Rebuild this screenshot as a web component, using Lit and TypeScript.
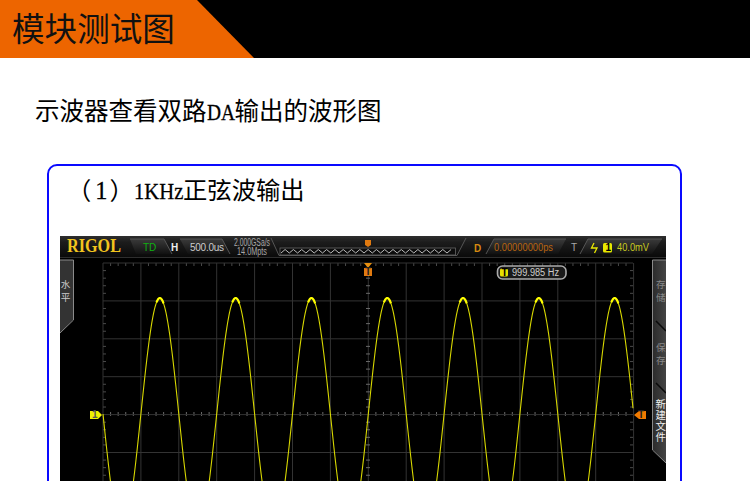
import { LitElement, html, css, svg } from "lit";
import { customElement } from "lit/decorators.js";

const X0 = 103, X1 = 633, Y0 = 263, Y1 = 565, CY = 414, STEP = 37.9;

function wavePath(a: number = X0, b: number = X1): string {
  const pts: string[] = [];
  for (let x = a; x <= b; x += 0.5) {
    const y = CY - 116 * Math.sin((2 * Math.PI * (x - X0)) / 75.8 + Math.PI);
    pts.push(`${x.toFixed(1)},${y.toFixed(1)}`);
  }
  return "M" + pts.join("L");
}

function grid() {
  const out = [];
  for (let i = 0; i <= 14; i++) {
    const x = X0 + i * STEP;
    out.push(svg`<line class="g" x1=${x} x2=${x} y1=${Y0} y2=${Y1} />`);
    for (let k = 1; k < 5; k++) {
      const tx = x + (k * STEP) / 5;
      if (i < 14) {
        out.push(svg`<line class="t" x1=${tx} x2=${tx} y1=${Y0} y2=${Y0 + 3} />`);
        out.push(svg`<line class="t2" x1=${tx} x2=${tx} y1=${CY - 2} y2=${CY + 2} />`);
      }
    }
  }
  for (let j = 0; j <= 8; j++) {
    const y = Y0 + j * STEP;
    out.push(svg`<line class="g" x1=${X0} x2=${X1} y1=${y} y2=${y} />`);
    for (let k = 1; k < 5; k++) {
      const ty = y + (k * STEP) / 5;
      out.push(svg`<line class="t" x1=${X0} x2=${X0 + 3} y1=${ty} y2=${ty} />`);
      out.push(svg`<line class="t" x1=${X1 - 3} x2=${X1} y1=${ty} y2=${ty} />`);
      out.push(svg`<line class="t2" x1=${368 - 2} x2=${368 + 2} y1=${ty} y2=${ty} />`);
    }
  }
  return out;
}

function memoryWave(): string {
  const pts: string[] = [];
  let up = false;
  for (let x = 281; x <= 455; x += 4.15) {
    pts.push(`${x.toFixed(1)},${up ? 249.5 : 253}`);
    up = !up;
  }
  return "M" + pts.join("L");
}

@customElement("app-root")
export class AppRoot extends LitElement {
  static styles = css`
    :host {
      display: block;
      width: 750px;
      height: 481px;
      overflow: hidden;
      background: #fff;
      color: #000;
      font-family: "Liberation Serif", "Noto Sans CJK SC", serif;
    }
    .banner {
      height: 58px;
      background: #000;
    }
    .tab {
      width: 254px;
      height: 58px;
      box-sizing: border-box;
      padding: 1px 0 0 12px;
      background: #ed6500;
      clip-path: polygon(0 0, 197px 0, 254px 58px, 0 58px);
      font-size: 32.6px;
      line-height: 58px;
      color: #111;
    }
    .sub {
      margin: 0;
      padding: 38px 0 0 35px;
      font-size: 24.5px;
      font-weight: 400;
      line-height: 32px;
      white-space: nowrap;
    }
    .latin {
      display: inline-block;
      font-family: "Liberation Serif", serif;
      transform-origin: left center;
      -webkit-text-stroke: 0.3px #000;
    }
    .sub .latin {
      font-size: 24px;
      transform: scaleX(0.81);
      margin-right: -6.6px;
    }
    .card {
      margin: 36px 0 0 47px;
      width: 635px;
      box-sizing: border-box;
      height: 400px;
      border: 2px solid #0a0aff;
      border-radius: 10px;
      padding: 9px 0 0 11px;
    }
    .cap {
      margin: 0;
      padding-left: 7px;
      font-size: 24.3px;
      font-weight: 400;
      line-height: 32px;
      white-space: nowrap;
    }
    .cap .num {
      padding-left: 4px;
      letter-spacing: 2px;
      -webkit-text-stroke: 0.3px #000;
    }
    .cap .latin {
      font-size: 24px;
      transform: scaleX(0.86);
      margin-right: -8px;
    }
    .scope {
      display: block;
      margin-top: 29px;
      width: 606px;
      height: 300px;
      background: #000;
    }
    .g { stroke: #333; stroke-width: 1; }
    .t { stroke: #4a4a4a; stroke-width: 1; }
    .t2 { stroke: #6a6a6a; stroke-width: 1; }
    .wave { fill: none; stroke: #d8d800; stroke-width: 1.1; }
    .peak { fill: none; stroke: #ffff00; stroke-width: 2.2; }
    .st {
      font-family: "Liberation Sans", Arial, sans-serif;
      font-size: 10px;
    }
    .white { fill: #ccc; }
    .grey { fill: #a8a8a8; }
    .menu {
      font-family: "Noto Sans CJK SC", sans-serif;
      font-size: 9.6px;
      writing-mode: vertical-rl;
    }
    .ls3 { letter-spacing: 3.4px; }
    .ls1 { font-size: 10.4px; letter-spacing: 0.6px; }
  `;

  render() {
    return html`
      <div class="banner"><div class="tab">模块测试图</div></div>
      <h2 class="sub">示波器查看双路<span class="latin">DA</span>输出的波形图</h2>
      <div class="card">
        <h3 class="cap">（<span class="num">1</span>）<span class="latin">1KHz</span>正弦波输出</h3>
        <svg class="scope" viewBox="60 236 606 300" xmlns="http://www.w3.org/2000/svg">
          <defs>
            <linearGradient id="bar" x1="0" y1="0" x2="0" y2="1">
              <stop offset="0" stop-color="#2e2e2e" />
              <stop offset="0.3" stop-color="#1c1c1c" />
              <stop offset="1" stop-color="#0a0a0a" />
            </linearGradient>
            <linearGradient id="btn" x1="0" y1="0" x2="0" y2="1">
              <stop offset="0" stop-color="#3a3a3a" />
              <stop offset="1" stop-color="#111" />
            </linearGradient>
            <linearGradient id="pane" x1="0" y1="0" x2="1" y2="0">
              <stop offset="0" stop-color="#2c2c2c" />
              <stop offset="1" stop-color="#444" />
            </linearGradient>
          </defs>
          <rect x="60" y="236" width="606" height="21" fill="url(#bar)" />
          <line x1="60" x2="666" y1="257.5" y2="257.5" stroke="#2e2e2e" />

          <text x="67" y="252" font-family="Liberation Serif, serif" font-weight="700" font-size="18" fill="#f2c41e" textLength="54" lengthAdjust="spacingAndGlyphs">RIGOL</text>

          <path d="M130 239H164L172 254H136Z" fill="url(#btn)" />
          <path d="M130 239H164L172 254" fill="none" stroke="#555" />
          <text class="st" x="143" y="251" fill="#10b010" font-size="11">TD</text>

          <text class="st" x="171" y="251" fill="#eee" font-weight="700" font-size="11">H</text>
          <path d="M180 239H222L230 254H188Z" fill="url(#btn)" />
          <path d="M180 239H222L230 254" fill="none" stroke="#555" />
          <text class="st white" x="190" y="251" font-size="10.5" textLength="34">500.0us</text>

          <text class="st grey" x="234" y="245.5" font-size="6.6" textLength="36" lengthAdjust="spacingAndGlyphs">2.000GSa/s</text>
          <text class="st grey" x="237" y="254.5" font-size="6.6" textLength="30" lengthAdjust="spacingAndGlyphs">14.0Mpts</text>

          <path d="M271 238L279 255.5H457L466 238" fill="none" stroke="#555" />
          <rect x="280" y="248" width="175.5" height="7" fill="#0c0c0c" stroke="#666" stroke-width="0.8" />
          <path d=${memoryWave()} fill="none" stroke="#bbb" stroke-width="1" />
          <path d="M365 240H371V245L368 247L365 245Z" fill="#e07a10" />

          <text class="st" x="474" y="251.5" fill="#d88a10" font-weight="700" font-size="11.5">D</text>
          <path d="M486 254L494 239H566L558 254Z" fill="url(#btn)" />
          <path d="M486 254L494 239H566" fill="none" stroke="#555" />
          <text class="st" x="494" y="250.5" fill="#b8640f" font-size="10" textLength="59" lengthAdjust="spacingAndGlyphs">0.00000000ps</text>

          <text class="st grey" x="571" y="251" font-size="11">T</text>
          <path d="M580 254L588 239H662L652 254Z" fill="url(#btn)" />
          <path d="M580 254L588 239H662" fill="none" stroke="#555" />
          <path d="M594 243L591.5 248H597L594.5 253" fill="none" stroke="#e8e800" stroke-width="1.3" />
          <rect x="603" y="243" width="9" height="9.5" rx="1.5" fill="#e8e800" />
          <text class="st" x="605.5" y="251" font-size="8" fill="#000" font-weight="700">1</text>
          <text class="st" x="617" y="251" font-size="10" fill="#c8c820" textLength="32" lengthAdjust="spacingAndGlyphs">40.0mV</text>

          ${grid()}

          <path d=${wavePath()} class="wave" />
          ${[160, 235.8, 311.6, 387.4, 463.2, 539, 614.8].map(
            (x) => svg`<path class="peak" d=${wavePath(x - 3.5, x + 3.5)} />`
          )}

          <path d="M60 260H73V320L60 333Z" fill="#333" />
          <path d="M60 260H73.5V320L60 333" fill="none" stroke="#8a8a8a" />
          <text class="menu ls3" x="65.5" y="280" fill="#ccc">水平</text>

          <path d="M666 260H653V450L666 463Z" fill="url(#pane)" />
          <path d="M666 260H652.5V450L666 463" fill="none" stroke="#8a8a8a" />
          <path d="M656 321L666 331M656 383L666 393" stroke="#0a0a0a" stroke-width="1.5" />
          <text class="menu ls3" x="660.8" y="280" fill="#888">存储</text>
          <text class="menu ls3" x="660.8" y="343" fill="#888">保存</text>
          <text class="menu ls1" x="660.6" y="398.5" fill="#eee">新建文件</text>

          <path d="M90 411H98L102 415L98 419H90Z" fill="#f0f000" />
          <text class="st" x="92" y="418" font-size="7.5" fill="#555" font-weight="700">1</text>
          <path d="M634 415L639 411H646V419H639Z" fill="#f07a00" />
          <text class="st" x="638" y="418" font-size="7.5" fill="#222" font-weight="700">T</text>

          <path d="M364 263H372L368 268Z" fill="#e89010" />
          <path d="M364 268H372V276H364Z" fill="#e07a10" />
          <text class="st" x="365" y="275" font-size="7.5" fill="#222" font-weight="700">T</text>

          <rect x="497.5" y="266" width="68.5" height="13" rx="5" fill="#1a1a1a" stroke="#aaa" stroke-width="1.6" />
          <rect x="500" y="268.5" width="8" height="8" rx="1.5" fill="#e8e000" />
          <text class="st" x="501.5" y="275.5" font-size="7" fill="#000" font-weight="700">T</text>
          <text class="st" x="512" y="276" font-size="9.4" fill="#ccc" textLength="47" lengthAdjust="spacingAndGlyphs">999.985 Hz</text>
        </svg>
      </div>
    `;
  }
}
